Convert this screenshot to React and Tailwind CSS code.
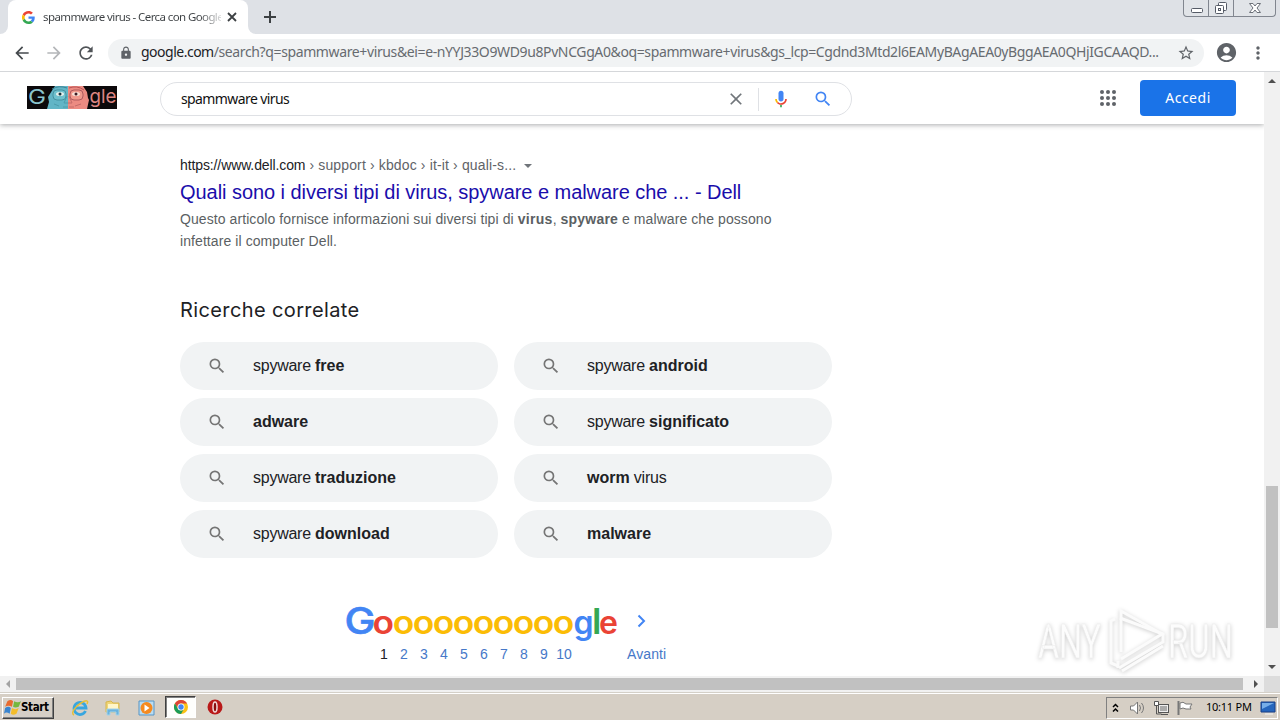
import { useState } from 'react'
import { MdArrowBack, MdArrowForward, MdRefresh, MdLock, MdStarBorder, MdAccountCircle, MdMoreVert, MdClose, MdSearch } from 'react-icons/md'

const related = [
  [['spyware ', false], ['free', true]],
  [['spyware ', false], ['android', true]],
  [['adware', true]],
  [['spyware ', false], ['significato', true]],
  [['spyware ', false], ['traduzione', true]],
  [['worm', true], [' virus', false]],
  [['spyware ', false], ['download', true]],
  [['malware', true]],
]

const pages = [1, 2, 3, 4, 5, 6, 7, 8, 9, 10]

const GoogleG = () => (
  <svg width="13" height="13" viewBox="0 0 48 48">
    <path fill="#EA4335" d="M24 9.5c3.5 0 6.700 1.200 9.200 3.600l6.900-6.900C35.900 2.400 30.500 0 24 0 14.600 0 6.500 5.400 2.600 13.200l8 6.200C12.400 13.700 17.700 9.500 24 9.500z" />
    <path fill="#4285F4" d="M47 24.500c0-1.600-.2-3.100-.4-4.500H24v9h12.900c-.6 3-2.200 5.500-4.700 7.200l7.700 6C44.400 38 47 31.800 47 24.500z" />
    <path fill="#FBBC05" d="M10.500 28.600A14.500 14.500 0 0 1 10.500 19.400l-8-6.200a24 24 0 0 0 0 21.600z" />
    <path fill="#34A853" d="M24 48c6.500 0 11.900-2.100 15.900-5.800l-7.700-6c-2.200 1.500-4.900 2.300-8.200 2.300-6.300 0-11.600-4.200-13.500-9.900l-8 6.200C6.500 42.600 14.600 48 24 48z" />
  </svg>
)

const WindowButtons = () => (
  <div className="ml-auto mr-[4px] flex h-[17px] rounded-b-[4px] border border-t-0 border-[#81868f] bg-[#e1e4e8]">
    <div className="w-[25px] border-r border-[#81868f]">
      <svg width="24" height="16"><rect x="7.500" y="8.500" width="11" height="4" rx="1" fill="#fff" stroke="#555b66" /></svg>
    </div>
    <div className="w-[25px] border-r border-[#81868f]">
      <svg width="24" height="16" fill="#fff" stroke="#555b66">
        <rect x="9.500" y="2.500" width="8" height="8" rx="1" />
        <rect x="6.500" y="5.500" width="8" height="8" rx="1" />
        <rect x="9.500" y="8.500" width="2" height="2" />
      </svg>
    </div>
    <div className="w-[41px]">
      <svg width="41" height="16"><path d="M15.500 3.500h3.500l2 2.500 2-2.500h3.500l-3.500 4.500 3.500 4.500H23l-2-2.500-2 2.500h-3.500L19 8z" fill="#fff" stroke="#6b7078" /></svg>
    </div>
  </div>
)

const TabStrip = () => (
  <div className="flex h-[34px] bg-[#dee1e6]">
    <div className="flex w-2 items-end bg-white"><div className="h-full w-2 rounded-br-lg bg-[#dee1e6]" /></div>
    <div className="flex h-[34px] w-60 items-center rounded-t-lg bg-white pl-[14px]">
      <GoogleG />
      <div className="ml-[8px] w-[178px] whitespace-nowrap bg-[linear-gradient(to_right,#3c4043_156px,#3c404333_177px)] bg-clip-text font-['Noto_Sans',sans-serif] text-[11.5px] tracking-[-0.6px] text-transparent">
        spammware virus - Cerca con Google
      </div>
      <svg width="10" height="10" className="ml-[6px]"><path d="M1 1l8 8M9 1L1 9" stroke="#3c4043" strokeWidth="1.800" /></svg>
    </div>
    <div className="flex w-2 bg-white"><div className="h-full w-2 rounded-bl-lg bg-[#dee1e6]" /></div>
    <div className="flex w-[28px] items-center justify-center">
      <svg width="12" height="12"><path d="M6 0v12M0 6h12" stroke="#3c4043" strokeWidth="2" /></svg>
    </div>
    <WindowButtons />
  </div>
)

const Toolbar = () => (
  <div className="flex h-[38px] items-center border-b border-[#d5d7da] bg-white pl-[12px] text-[#5f6368]">
    <MdArrowBack size={20} className="text-[#45494d]" />
    <MdArrowForward size={20} className="ml-[12px] text-[#b4b6b9]" />
    <MdRefresh size={20} className="ml-[12px] text-[#505458]" />
    <div className="ml-[12px] flex h-[28px] w-[1096px] items-center rounded-full bg-[#f1f3f4] pl-[11px]">
      <MdLock size={14} />
      <div className="-mt-[2px] ml-[8px] w-[1018px] whitespace-nowrap font-['Noto_Sans',sans-serif] text-[14px] tracking-[-0.38px] text-[#676b70]">
        <span className="tracking-[-0.5px] text-[#202124]">google.com</span>/search?q=spammware+virus&amp;ei=e-nYYJ33O9WD9u8PvNCGgA0&amp;oq=spammware+virus&amp;gs_lcp=Cgdnd3Mtd2l6EAMyBAgAEA0yBggAEA0QHjIGCAAQD...
      </div>
      <MdStarBorder size={18} className="ml-[18px]" />
    </div>
    <MdAccountCircle size={23} className="ml-[11px]" />
    <MdMoreVert size={20} className="ml-[10px]" />
  </div>
)

const Doodle = () => (
  <svg width="90" height="24" viewBox="0 0 90 24" className="overflow-visible font-['Inter',sans-serif]">
    <rect width="90" height="23" fill="#0c090b" />
    <path d="M20 23l2-7-1-5 5-8 2-3h13v23z" fill="#62b5c6" />
    <path d="M41 0h15l4 6 1 6 1 2-2 9H41z" fill="#ec8b82" />
    <path d="M25 3q7-4 15-1" stroke="#3c8194" fill="none" />
    <path d="M42 2q8-3 15 2" stroke="#b65255" fill="none" />
    <rect x="26" y="4" width="13" height="10" rx="4" fill="#70c1ce" stroke="#4591a0" />
    <rect x="43" y="4" width="13" height="10" rx="4" fill="#f09a8d" stroke="#ad5a5d" />
    <ellipse cx="33" cy="8" rx="4" ry="2" fill="#e5f1ed" />
    <ellipse cx="49" cy="8" rx="4" ry="2" fill="#f9e2d7" />
    <circle cx="33" cy="8" r="1.500" fill="#122f3c" />
    <circle cx="49" cy="8" r="1.500" fill="#3b1b24" />
    <path d="M40 10l-3 7h4M27 18l5 2M36 21h5" stroke="#4c9cab" fill="none" />
    <path d="M42 10l3 7h-4M48 20l6-2M42 21h5" stroke="#c46b69" fill="none" />
    <text x="1" y="18" fontSize="20" textLength="18" lengthAdjust="spacingAndGlyphs" fill="#8bc4cd">G</text>
    <text x="62.500" y="17" fontSize="19" textLength="27" lengthAdjust="spacingAndGlyphs" fill="#dd8582">gle</text>
  </svg>
)

const Mic = () => (
  <svg width="20" height="20" viewBox="0 0 24 24">
    <path fill="#4285f4" d="M12 15c1.700 0 3-1.300 3-3V5a3 3 0 0 0-6 0v7c0 1.700 1.300 3 3 3z" />
    <path fill="#34a853" d="M11 18.900h2V22h-2z" />
    <path fill="#fbbc04" d="M7 12H5c0 2 .8 3.700 2.100 4.900l1.400-1.400A5 5 0 0 1 7 12z" />
    <path fill="#ea4335" d="M12 17c-1.400 0-2.600-.6-3.500-1.500l-1.400 1.400C8.300 18.200 10 19 12 19c3.900 0 7-3.100 7-7h-2c0 2.800-2.200 5-5 5z" />
  </svg>
)

const AppsGrid = () => (
  <svg width="24" height="24" className="ml-[244px]" fill="#5f6368">
    {[6, 12, 18].map((y) => [6, 12, 18].map((x) => <circle key={`${x}-${y}`} cx={x} cy={y} r="2" />))}
  </svg>
)

const Header = ({ query, setQuery }) => (
  <header className="relative flex h-[52px] shrink-0 items-center bg-white pl-[27px] shadow-[0_1px_5px_rgba(32,33,36,0.38)]">
    <Doodle />
    <div className="ml-[43px] mt-[2px] flex h-[34px] w-[692px] items-center rounded-full border border-[#dfe1e5] pl-[20px]">
      <input
        value={query}
        onChange={(e) => setQuery(e.target.value)}
        className="-mt-[2px] w-[545px] bg-transparent font-['Noto_Sans',sans-serif] text-[14px] tracking-[-0.6px] text-[#111] outline-none"
      />
      <MdClose size={20} className="text-[#70757a]" onClick={() => setQuery('')} />
      <div className="ml-[12px] h-[23px] w-px bg-[#dfe1e5]" />
      <div className="ml-[12px]"><Mic /></div>
      <MdSearch size={20} className="ml-[22px] text-[#4285f4]" />
    </div>
    <AppsGrid />
    <button className="ml-[20px] h-[36px] w-[96px] rounded bg-[#1a73e8] pb-[2px] font-['Noto_Sans',sans-serif] text-[14px] tracking-[0.5px] text-white">Accedi</button>
  </header>
)

const Result = () => (
  <div className="font-['Liberation_Sans',sans-serif]">
    <div className="flex h-[18px] items-center whitespace-nowrap text-[14px] text-[#5f6368]">
      <span className="tracking-[-0.11px] text-[#202124]">https://www.dell.com</span>
      <span className="ml-[4px] tracking-[0.14px]">› support › kbdoc › it-it › quali-s...</span>
      <svg width="8" height="4" className="ml-[8px] mt-[2px]"><path d="M0 0h8L4 4z" fill="#70757a" /></svg>
    </div>
    <h3 className="mt-[5px] whitespace-nowrap text-[20px] leading-[26px] tracking-[-0.05px] text-[#1a0dab]">
      Quali sono i diversi tipi di virus, spyware e malware che ... - Dell
    </h3>
    <p className="mt-[3px] whitespace-nowrap text-[14px] leading-[22px] tracking-[0.08px] text-[#5b5f63]">
      Questo articolo fornisce informazioni sui diversi tipi di <b className="tracking-[0.3px]">virus</b>, <b className="tracking-[0.2px]">spyware</b> e malware che possono
      <br />
      infettare il computer Dell.
    </p>
  </div>
)

const Related = () => (
  <section>
    <h4 className="mt-[43px] h-[30px] w-[300px] font-['Inter',sans-serif] text-[20px] leading-[30px] tracking-[0.38px] text-[#202124]">Ricerche correlate</h4>
    <div className="mt-[17px] grid w-[652px] grid-cols-2 gap-x-4 gap-y-2">
      {related.map((parts, i) => (
        <a key={i} className="flex h-12 items-center rounded-full bg-[#f1f3f4] pl-[27px] font-['Liberation_Sans',sans-serif] text-[16px] text-[#202124]">
          <MdSearch size={20} className="text-[#757575]" />
          <span className="ml-[26px] whitespace-pre">
            {parts.map(([text, bold]) => (
              <span key={text} className={bold ? 'font-bold' : 'tracking-[-0.25px]'}>{text}</span>
            ))}
          </span>
        </a>
      ))}
    </div>
  </section>
)

const Pagination = () => (
  <nav className="ml-[165px] mt-[44px]">
    <div className="flex items-center">
      <svg width="275" height="42" className="overflow-visible font-['Inter',sans-serif]" fontSize="32" fontWeight="600">
        <text y="31.500" x="-0.500" fontSize="37" fontWeight="500" textLength="31" lengthAdjust="spacingAndGlyphs" fill="#4285f4" stroke="#4285f4" strokeWidth="0.6">G</text>
        <text y="32" x="27.500" textLength="21.500" lengthAdjust="spacingAndGlyphs" fill="#ea4335">o</text>
        {[47.700, 67.700, 87.700, 107.700, 127.700, 147.700, 167.700, 187.700, 207.700].map((x) => (
          <text key={x} y="32" x={x} textLength="21.500" lengthAdjust="spacingAndGlyphs" fill="#fbbc05">o</text>
        ))}
        <text y="32" x="228.500" fill="#4285f4">g</text>
        <text y="32" x="247" fontSize="36" fill="#34a853">l</text>
        <text y="32" x="254" fill="#ea4335">e</text>
      </svg>
      <svg width="10" height="14" className="mb-[4px] ml-[17px]"><path d="M1.500 1.500L7 7l-5.500 5.500" fill="none" stroke="#4285f4" strokeWidth="2" /></svg>
    </div>
    <div className="flex h-[20px] items-center pl-[29px] font-['Liberation_Sans',sans-serif] text-[14px] text-[#4678c8]">
      {pages.map((n) => (
        <span key={n} className={n === 1 ? 'w-[20px] text-center text-[#202124]' : 'flex w-[20px] justify-center'}>{n}</span>
      ))}
      <span className="ml-[53px] tracking-[0.1px]">Avanti</span>
    </div>
  </nav>
)

const Watermark = () => (
  <svg width="210" height="76" className="pointer-events-none absolute left-[1030px] top-[602px] overflow-visible font-['Roboto',sans-serif] drop-shadow-[0_1px_2px_rgba(0,0,0,0.2)]">
    <g fill="#fcfcfc" fontSize="48" stroke="#ececec" strokeWidth="0.5">
      <text x="8" y="56" textLength="63" lengthAdjust="spacingAndGlyphs">ANY</text>
      <text x="138" y="56" textLength="65" lengthAdjust="spacingAndGlyphs">RUN</text>
    </g>
    <g fill="none" stroke="#fbfbfb" strokeWidth="3">
      <path d="M91 50V9l41 23-41 25" />
      <path d="M85 17l-4 2v42l7 3M89 66l44-26v-8L90 16" />
      <path d="M92 69l41-25M88 59v7" />
    </g>
  </svg>
)

const VerticalScroll = () => (
  <div className="flex w-4 flex-col items-center bg-[#f1f1f1]">
    <svg width="16" height="16"><path d="M4 11l4-4 4 4z" fill="#505050" /></svg>
    <div className="mt-[398px] h-[142px] w-[12px] bg-[#c1c1c1]" />
    <svg width="16" height="16" className="mt-auto"><path d="M4 5h8l-4 4z" fill="#505050" /></svg>
  </div>
)

const HorizontalScroll = () => (
  <div className="flex h-4 items-center bg-[#f1f1f1]">
    <svg width="16" height="16"><path d="M10 4v8L6 8z" fill="#a3a3a3" /></svg>
    <div className="h-[12px] w-[1227px] bg-[#c1c1c1]" />
    <svg width="21" height="16"><path d="M11 4v8l4-4z" fill="#505050" /></svg>
    <div className="h-4 flex-1 bg-[#dcdcdc]" />
  </div>
)

const WindowsFlag = () => (
  <svg width="17" height="16" viewBox="1 1 15 14">
    <path d="M4 2q3-2 5 0L8 7Q5 5 2 7z" fill="#e86b2f" />
    <path d="M10 2q3 2 6 0l-2 5q-3 1-5 0z" fill="#75b83e" />
    <path d="M2 8q3-2 5 0l-1 5q-3-2-5 0z" fill="#3984cf" />
    <path d="M8 8q3 2 6 0l-2 5q-3 2-5 0z" fill="#f4bd29" />
  </svg>
)

const IeIcon = () => (
  <svg width="18" height="18" viewBox="0 0 18 18">
    <path d="M14.500 12A6 6 0 1 1 15 9H4" fill="none" stroke="#38a6df" strokeWidth="2.800" />
    <path d="M3 16C-1 14 5 7 10 4s8-3 6 1" fill="none" stroke="#e8bf35" strokeWidth="1.500" />
  </svg>
)

const FolderIcon = () => (
  <svg width="18" height="18" viewBox="0 0 18 18">
    <path d="M2 3l5-1 2 2h6v9H2z" fill="#efd577" stroke="#d7b64d" />
    <path d="M4 5h10v5H4z" fill="#fff6c9" />
    <path d="M3 16v-6h12v6h-3v-3H6v3z" fill="#69b3de" stroke="#a4d2e9" />
  </svg>
)

const PlayerIcon = () => (
  <svg width="17" height="18" viewBox="0 0 17 18">
    <path d="M1 2h15v14H1z" fill="#b9dcf2" stroke="#5795c5" />
    <circle cx="8.500" cy="9" r="6" fill="#f58a1f" />
    <path d="M6.500 5.500v7l5-3.500z" fill="#fff" />
  </svg>
)

const ChromeIcon = () => (
  <svg width="14" height="14" viewBox="0 0 24 24">
    <circle cx="12" cy="12" r="12" fill="#fbc116" />
    <path d="M1.600 6A12 12 0 0 1 22.400 6H12a6 6 0 0 0-5.200 9z" fill="#dd4437" />
    <path d="M1.600 6A12 12 0 0 0 12 24l5.200-9A6 6 0 0 1 6.800 15z" fill="#1b9b58" />
    <circle cx="12" cy="12" r="6" fill="#fff" />
    <circle cx="12" cy="12" r="4.600" fill="#4285f4" />
  </svg>
)

const Taskbar = () => (
  <footer className="flex h-[28px] items-center border-t border-[#d4d0c8] bg-[#d6cfc5] pl-[2px] shadow-[inset_0_1px_0_#fff] text-black">
    <button className="mt-[2px] flex h-[22px] w-[52px] items-center border border-b-[#404040] border-l-white border-r-[#404040] border-t-white pl-px font-['DejaVu_Sans_Condensed','DejaVu_Sans',sans-serif] text-[11.5px] font-bold tracking-[-0.35px] shadow-[inset_-1px_-1px_0_#808080]">
      <WindowsFlag />
      <span>Start</span>
    </button>
    <div className="ml-[17px] mt-[2px]"><IeIcon /></div>
    <div className="ml-[15px] mt-[2px]"><FolderIcon /></div>
    <div className="ml-[16px] mt-[2px]"><PlayerIcon /></div>
    <div className="ml-[10px] mt-[1px] flex h-[22px] w-[31px] items-center justify-center border border-b-white border-l-[#404040] border-r-white border-t-[#404040] bg-[#fefefc] shadow-[inset_1px_1px_0_#808080]"><ChromeIcon /></div>
    <svg width="16" height="16" className="ml-[11px] mt-[1px]">
      <circle cx="8" cy="8" r="7.500" fill="#b91919" />
      <ellipse cx="8" cy="8" rx="2" ry="5" fill="#8a0d0d" stroke="#f0dada" strokeWidth="1.500" />
    </svg>
    <div className="ml-auto mr-[2px] mt-[2px] flex h-[22px] w-[172px] items-center border border-b-white border-l-[#808080] border-r-white border-t-[#808080] pl-[5px]">
      <svg width="7" height="10" fill="none" stroke="#000" strokeWidth="1.500"><path d="M1 4l2.500-2.500L6 4M1 8.500L3.500 6 6 8.500" /></svg>
      <svg width="18" height="16" className="ml-[10px]">
        <path d="M1.500 6h3l4-4v12l-4-4h-3z" fill="#fff" stroke="#777" />
        <path d="M10.500 5q2 3 0 6M12.500 3q4 5 0 10" fill="none" stroke="#777" />
      </svg>
      <svg width="17" height="16" className="ml-[6px]">
        <rect x="5.500" y="4.500" width="10" height="8" fill="#aaa" stroke="#555" />
        <rect x="6.500" y="5.500" width="8" height="6" fill="none" stroke="#fff" opacity=".8" />
        <path d="M1.500 1.500h4v4h-4z" fill="#fff" stroke="#555" />
        <path d="M3.500 6v8h5M8 14.500h7" fill="none" stroke="#555" />
      </svg>
      <svg width="16" height="16" className="ml-[7px]">
        <path d="M3 3q3-2 6 1h6l-2 3 1 2H9Q6 7 3 9z" fill="#fff" stroke="#777" />
        <path d="M1.500 1v14" stroke="#777" strokeWidth="2" />
      </svg>
      <span className="ml-[13px] w-[46px] whitespace-nowrap font-['Noto_Sans',sans-serif] text-[11px] tracking-[-0.25px]">10:11 PM</span>
      <svg width="16" height="14" className="ml-[8px]">
        <path d="M1 1h14v10H1z" fill="#2666bd" stroke="#183f86" />
        <path d="M2 2h12L2 8z" fill="#77aee8" />
        <path d="M5 13h8" stroke="#f4f4f4" />
      </svg>
    </div>
  </footer>
)

const App = () => {
  const [query, setQuery] = useState('spammware virus')

  return (
    <div className="relative h-[720px] w-[1280px] overflow-hidden bg-white">
      <TabStrip />
      <Toolbar />
      <div className="flex h-[604px]">
        <div className="flex w-[1264px] flex-col overflow-hidden">
          <Header query={query} setQuery={setQuery} />
          <main className="pl-[180px] pt-[32px]">
            <Result />
            <Related />
            <Pagination />
          </main>
        </div>
        <VerticalScroll />
      </div>
      <HorizontalScroll />
      <Taskbar />
      <Watermark />
    </div>
  )
}

export default App
